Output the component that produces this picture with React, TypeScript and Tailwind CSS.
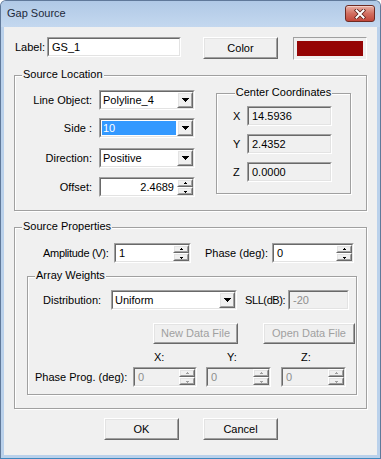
import React from 'react'

type BoxProps = {
  className?: string
  inner?: string
  children?: React.ReactNode
}

// classic 3D edges
function Sunken({ className = '', inner = '', children }: BoxProps) {
  return (
    <div className={`shrink-0 border border-t-[#a0a0a0] border-l-[#a0a0a0] border-b-white border-r-white ${className}`}>
      <div className={`h-full w-full border border-t-[#696969] border-l-[#696969] border-b-[#e3e3e3] border-r-[#e3e3e3] ${inner}`}>
        {children}
      </div>
    </div>
  )
}

function Raised({ className = '', inner = '', children }: BoxProps) {
  return (
    <div className={`shrink-0 border border-t-white border-l-white border-b-[#696969] border-r-[#696969] ${className}`}>
      <div className={`h-full w-full bg-[#f0f0f0] border border-t-[#e3e3e3] border-l-[#e3e3e3] border-b-[#a0a0a0] border-r-[#a0a0a0] ${inner}`}>
        {children}
      </div>
    </div>
  )
}

function Tri() {
  return (
    <svg width="7" height="4" shapeRendering="crispEdges" className="block">
      <path d="M0 0h7v1H0zM1 1h5v1H1zM2 2h3v1H2zM3 3h1v1H3z" fill="#000" />
    </svg>
  )
}

function SpinArrow({ up, gray }: { up?: boolean; gray?: boolean }) {
  return (
    <svg width="5" height="3" shapeRendering="crispEdges" className="block">
      <path
        d={up ? 'M2 0h1v1H2zM1 1h3v1H1z' : 'M1 1h3v1H1zM2 2h1v1H2z'}
        fill={gray ? '#a0a0a0' : '#000'}
      />
    </svg>
  )
}

function Combo({ className = '', value, selected }: { className?: string; value: string; selected?: boolean }) {
  return (
    <Sunken className={`h-[20px] ${className}`} inner="flex bg-white">
      <div className="flex-1 p-[1px]">
        <div className={`h-full flex items-center pl-[1px] ${selected ? 'bg-[#3399ff] text-white' : ''}`}>{value}</div>
      </div>
      <Raised className="w-[16px] h-full" inner="flex items-center justify-center">
        <Tri />
      </Raised>
    </Sunken>
  )
}

function Spin({
  className = '',
  value,
  right,
  disabled,
}: {
  className?: string
  value: string
  right?: boolean
  disabled?: boolean
}) {
  return (
    <Sunken className={`h-[20px] ${className}`} inner={`flex ${disabled ? 'bg-[#f0f0f0] text-[#8e8e8e]' : 'bg-white'}`}>
      <div className={`flex-1 flex items-center px-[3px] ${right ? 'justify-end' : ''}`}>{value}</div>
      <div className="w-[16px] flex flex-col">
        <Raised className="flex-1" inner="flex items-center justify-center">
          <SpinArrow up gray={disabled} />
        </Raised>
        <Raised className="flex-1" inner="flex items-center justify-center">
          <SpinArrow gray={disabled} />
        </Raised>
      </div>
    </Sunken>
  )
}

function Field({ className = '', value, gray }: { className?: string; value: string; gray?: boolean }) {
  return (
    <Sunken className={`h-[20px] ${className}`} inner={`flex items-center pl-[3px] bg-[#f0f0f0] ${gray ? 'text-[#8e8e8e]' : ''}`}>
      {value}
    </Sunken>
  )
}

function Btn({ className = '', children, disabled }: BoxProps & { disabled?: boolean }) {
  return (
    <Raised className={className} inner={`flex items-center justify-center ${disabled ? 'text-[#a0a0a0]' : ''}`}>
      {children}
    </Raised>
  )
}

function Group({ title, className = '', center, children }: { title: string; className?: string; center?: boolean; children?: React.ReactNode }) {
  return (
    <div className={`relative shrink-0 border border-[#a0a0a0] shadow-[inset_1px_1px_0_#fff,1px_1px_0_#fff] ${className}`}>
      <div className={`absolute -top-[8px] flex ${center ? 'left-0 right-0 justify-center' : 'left-[7px]'}`}>
        <span className="bg-[#f0f0f0] px-[1px] leading-[13px]">{title}</span>
      </div>
      {children}
    </div>
  )
}

function LocRow({ label, className = '', children }: { label: string; className?: string; children: React.ReactNode }) {
  return (
    <div className={`flex items-center h-[20px] ${className}`}>
      <div className="w-[77px] shrink-0 text-right">{label}</div>
      <div className="ml-[7px]">{children}</div>
    </div>
  )
}

function CoordRow({ label, value, className = '' }: { label: string; value: string; className?: string }) {
  return (
    <div className={`flex items-center h-[20px] ${className}`}>
      <div className="ml-[16px] w-[14px] shrink-0">{label}</div>
      <Field className="w-[85px]" value={value} />
    </div>
  )
}

function CloseButton() {
  return (
    <div className="mt-[4px] mr-[5px] w-[30px] h-[17px] rounded-[3px] border border-[#6e2b23] bg-gradient-to-b from-[#e8b0a5] via-[#d26f61] to-[#c2463a] flex items-center justify-center shadow-[inset_0_1px_0_#f3cfc8]">
      <svg width="12" height="10" className="block">
        <path d="M2.5 1.5L9.5 8.5M9.5 1.5L2.5 8.5" stroke="#5b2019" strokeWidth="3.6" strokeLinecap="square" />
        <path d="M2.5 1.5L9.5 8.5M9.5 1.5L2.5 8.5" stroke="#ffffff" strokeWidth="2" strokeLinecap="square" />
      </svg>
    </div>
  )
}

export default function App() {
  return (
    <div className="w-[381px] h-[459px] flex flex-col rounded-t-[6px] border border-[#60799a] border-b-[#3f88bf] bg-[#bad1eb] text-[11px] leading-[13px] text-black font-['Liberation_Sans',Arial,sans-serif]">
      {/* title bar */}
      <div className="h-[26px] shrink-0 flex items-start justify-between rounded-t-[5px] bg-gradient-to-b from-[#b0c9e6] to-[#c4d8ef]">
        <span className="ml-[6px] mt-[6px] text-[#1e2a3a]">Gap Source</span>
        <CloseButton />
      </div>

      {/* client */}
      <div className="flex-1 mx-[3px] mb-[3px] bg-[#f0f0f0] flex flex-col">
        <div className="mt-[10px] ml-[11px] h-[23px] flex items-start">
          <div className="w-[32px] h-[20px] shrink-0 flex items-center">Label:</div>
          <Sunken className="w-[134px] h-[20px]" inner="flex items-center pl-[3px] bg-white">
            GS_1
          </Sunken>
          <Btn className="ml-[22px] w-[75px] h-[22px]">Color</Btn>
          <div className="ml-[15px] w-[74px] h-[23px] shrink-0 border border-t-[#a0a0a0] border-l-[#a0a0a0] border-b-white border-r-white p-[3px]">
            <div className="h-full w-full bg-[#950505]" />
          </div>
        </div>

        <Group title="Source Location" className="ml-[10px] mt-[15px] w-[353px] h-[136px] flex items-start">
          <div className="flex flex-col shrink-0">
            <LocRow label="Line Object:" className="mt-[14px]">
              <Combo className="w-[96px]" value="Polyline_4" />
            </LocRow>
            <LocRow label="Side :" className="mt-[8px]">
              <Combo className="w-[96px]" value="10" selected />
            </LocRow>
            <LocRow label="Direction:" className="mt-[10px]">
              <Combo className="w-[96px]" value="Positive" />
            </LocRow>
            <LocRow label="Offset:" className="mt-[9px]">
              <Spin className="w-[96px]" value="2.4689" right />
            </LocRow>
          </div>

          <Group title="Center Coordinates" center className="ml-[21px] mt-[17px] w-[135px] h-[101px] flex flex-col">
            <CoordRow label="X" value="14.5936" className="mt-[12px]" />
            <CoordRow label="Y" value="2.4352" className="mt-[8px]" />
            <CoordRow label="Z" value="0.0000" className="mt-[8px]" />
          </Group>
        </Group>

        <Group title="Source Properties" className="ml-[10px] mt-[16px] w-[353px] h-[182px] flex flex-col">
          <div className="mt-[15px] ml-[28px] h-[20px] flex items-center">
            <div className="w-[71px] shrink-0 tracking-[-0.3px]">Amplitude (V):</div>
            <Spin className="w-[77px]" value="1" />
            <div className="ml-[14px] w-[67px] shrink-0">Phase (deg):</div>
            <Spin className="w-[82px]" value="0" />
          </div>

          <Group title="Array Weights" className="ml-[12px] mt-[13px] w-[330px] h-[119px] flex flex-col">
            <div className="mt-[13px] ml-[15px] h-[20px] flex items-center">
              <div className="w-[68px] shrink-0">Distribution:</div>
              <Combo className="w-[126px]" value="Uniform" />
              <div className="ml-[8px] w-[43px] shrink-0 tracking-[-0.4px]">SLL(dB):</div>
              <Field className="w-[61px]" value="-20" gray />
            </div>

            <div className="mt-[13px] ml-[125px] h-[21px] flex">
              <Btn className="w-[85px] h-[21px]" disabled>
                New Data File
              </Btn>
              <Btn className="ml-[25px] w-[92px] h-[21px]" disabled>
                Open Data File
              </Btn>
            </div>

            <div className="mt-[7px] ml-[105px] h-[13px] flex">
              <div className="w-[64px] shrink-0 pl-[21px]">X:</div>
              <div className="ml-[9px] w-[65px] shrink-0 pl-[21px]">Y:</div>
              <div className="ml-[10px] w-[65px] shrink-0 pl-[20px]">Z:</div>
            </div>

            <div className="mt-[3px] ml-[7px] h-[20px] flex items-center">
              <div className="w-[98px] shrink-0">Phase Prog. (deg):</div>
              <Spin className="w-[64px]" value="0" disabled />
              <Spin className="ml-[9px] w-[65px]" value="0" disabled />
              <Spin className="ml-[10px] w-[65px]" value="0" disabled />
            </div>
          </Group>
        </Group>

        <div className="mt-[9px] ml-[100px] flex">
          <Btn className="w-[75px] h-[22px]">OK</Btn>
          <Btn className="ml-[24px] w-[75px] h-[22px]">Cancel</Btn>
        </div>
      </div>
    </div>
  )
}
